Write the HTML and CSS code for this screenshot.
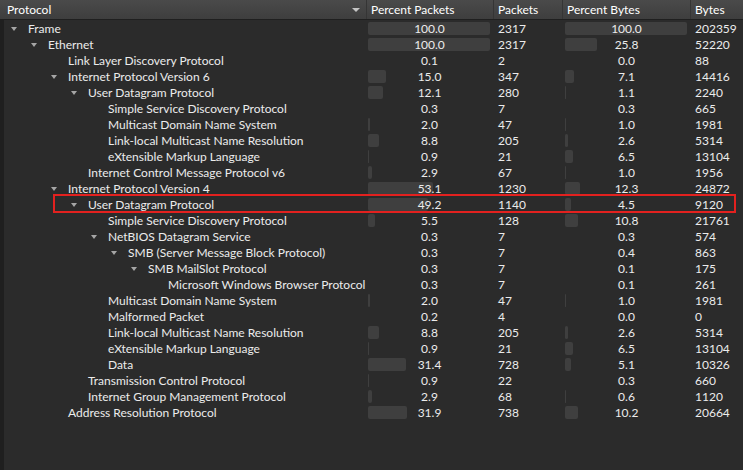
FILE: index.html
```html
<!DOCTYPE html>
<html>
<head>
<meta charset="utf-8">
<link rel="stylesheet" href="styles.css">
</head>
<body>
<div class="view">
  <div class="head">
    <div class="hc hc-proto"><span>Protocol</span><span class="sort"></span></div>
    <div class="hc">Percent Packets</div>
    <div class="hc">Packets</div>
    <div class="hc">Percent Bytes</div>
    <div class="hc">Bytes</div>
  </div>
  <div class="body">
    <div class="row"><div class="tree l0"><span class="tw open"></span>Frame</div><div class="pct"><i class="bar" style="width:122px"></i><span>100.0</span></div><div class="num">2317</div><div class="pct pb"><i class="bar" style="width:122px"></i><span>100.0</span></div><div class="num">202359</div></div>
    <div class="row"><div class="tree l1"><span class="tw open"></span>Ethernet</div><div class="pct"><i class="bar" style="width:122px"></i><span>100.0</span></div><div class="num">2317</div><div class="pct pb"><i class="bar" style="width:32px"></i><span>25.8</span></div><div class="num">52220</div></div>
    <div class="row"><div class="tree l2"><span class="tw"></span>Link Layer Discovery Protocol</div><div class="pct"><i class="bar" style="width:0px"></i><span>0.1</span></div><div class="num">2</div><div class="pct pb"><i class="bar" style="width:0px"></i><span>0.0</span></div><div class="num">88</div></div>
    <div class="row"><div class="tree l2"><span class="tw open"></span>Internet Protocol Version 6</div><div class="pct"><i class="bar" style="width:18px"></i><span>15.0</span></div><div class="num">347</div><div class="pct pb"><i class="bar" style="width:9px"></i><span>7.1</span></div><div class="num">14416</div></div>
    <div class="row"><div class="tree l3"><span class="tw open"></span>User Datagram Protocol</div><div class="pct"><i class="bar" style="width:15px"></i><span>12.1</span></div><div class="num">280</div><div class="pct pb"><i class="bar" style="width:1px"></i><span>1.1</span></div><div class="num">2240</div></div>
    <div class="row"><div class="tree l4"><span class="tw"></span>Simple Service Discovery Protocol</div><div class="pct"><i class="bar" style="width:0px"></i><span>0.3</span></div><div class="num">7</div><div class="pct pb"><i class="bar" style="width:0px"></i><span>0.3</span></div><div class="num">665</div></div>
    <div class="row"><div class="tree l4"><span class="tw"></span>Multicast Domain Name System</div><div class="pct"><i class="bar" style="width:2px"></i><span>2.0</span></div><div class="num">47</div><div class="pct pb"><i class="bar" style="width:1px"></i><span>1.0</span></div><div class="num">1981</div></div>
    <div class="row"><div class="tree l4"><span class="tw"></span>Link-local Multicast Name Resolution</div><div class="pct"><i class="bar" style="width:11px"></i><span>8.8</span></div><div class="num">205</div><div class="pct pb"><i class="bar" style="width:3px"></i><span>2.6</span></div><div class="num">5314</div></div>
    <div class="row"><div class="tree l4"><span class="tw"></span>eXtensible Markup Language</div><div class="pct"><i class="bar" style="width:1px"></i><span>0.9</span></div><div class="num">21</div><div class="pct pb"><i class="bar" style="width:8px"></i><span>6.5</span></div><div class="num">13104</div></div>
    <div class="row"><div class="tree l3"><span class="tw"></span>Internet Control Message Protocol v6</div><div class="pct"><i class="bar" style="width:4px"></i><span>2.9</span></div><div class="num">67</div><div class="pct pb"><i class="bar" style="width:1px"></i><span>1.0</span></div><div class="num">1956</div></div>
    <div class="row"><div class="tree l2"><span class="tw open"></span>Internet Protocol Version 4</div><div class="pct"><i class="bar" style="width:65px"></i><span>53.1</span></div><div class="num">1230</div><div class="pct pb"><i class="bar" style="width:15px"></i><span>12.3</span></div><div class="num">24872</div></div>
    <div class="row sel"><div class="tree l3"><span class="tw open"></span>User Datagram Protocol</div><div class="pct"><i class="bar" style="width:60px"></i><span>49.2</span></div><div class="num">1140</div><div class="pct pb"><i class="bar" style="width:6px"></i><span>4.5</span></div><div class="num">9120</div><div class="mark"></div></div>
    <div class="row"><div class="tree l4"><span class="tw"></span>Simple Service Discovery Protocol</div><div class="pct"><i class="bar" style="width:7px"></i><span>5.5</span></div><div class="num">128</div><div class="pct pb"><i class="bar" style="width:13px"></i><span>10.8</span></div><div class="num">21761</div></div>
    <div class="row"><div class="tree l4"><span class="tw open"></span>NetBIOS Datagram Service</div><div class="pct"><i class="bar" style="width:0px"></i><span>0.3</span></div><div class="num">7</div><div class="pct pb"><i class="bar" style="width:0px"></i><span>0.3</span></div><div class="num">574</div></div>
    <div class="row"><div class="tree l5"><span class="tw open"></span>SMB (Server Message Block Protocol)</div><div class="pct"><i class="bar" style="width:0px"></i><span>0.3</span></div><div class="num">7</div><div class="pct pb"><i class="bar" style="width:0px"></i><span>0.4</span></div><div class="num">863</div></div>
    <div class="row"><div class="tree l6"><span class="tw open"></span>SMB MailSlot Protocol</div><div class="pct"><i class="bar" style="width:0px"></i><span>0.3</span></div><div class="num">7</div><div class="pct pb"><i class="bar" style="width:0px"></i><span>0.1</span></div><div class="num">175</div></div>
    <div class="row"><div class="tree l7"><span class="tw"></span>Microsoft Windows Browser Protocol</div><div class="pct"><i class="bar" style="width:0px"></i><span>0.3</span></div><div class="num">7</div><div class="pct pb"><i class="bar" style="width:0px"></i><span>0.1</span></div><div class="num">261</div></div>
    <div class="row"><div class="tree l4"><span class="tw"></span>Multicast Domain Name System</div><div class="pct"><i class="bar" style="width:2px"></i><span>2.0</span></div><div class="num">47</div><div class="pct pb"><i class="bar" style="width:1px"></i><span>1.0</span></div><div class="num">1981</div></div>
    <div class="row"><div class="tree l4"><span class="tw"></span>Malformed Packet</div><div class="pct"><i class="bar" style="width:0px"></i><span>0.2</span></div><div class="num">4</div><div class="pct pb"><i class="bar" style="width:0px"></i><span>0.0</span></div><div class="num">0</div></div>
    <div class="row"><div class="tree l4"><span class="tw"></span>Link-local Multicast Name Resolution</div><div class="pct"><i class="bar" style="width:11px"></i><span>8.8</span></div><div class="num">205</div><div class="pct pb"><i class="bar" style="width:3px"></i><span>2.6</span></div><div class="num">5314</div></div>
    <div class="row"><div class="tree l4"><span class="tw"></span>eXtensible Markup Language</div><div class="pct"><i class="bar" style="width:1px"></i><span>0.9</span></div><div class="num">21</div><div class="pct pb"><i class="bar" style="width:8px"></i><span>6.5</span></div><div class="num">13104</div></div>
    <div class="row"><div class="tree l4"><span class="tw"></span>Data</div><div class="pct"><i class="bar" style="width:38px"></i><span>31.4</span></div><div class="num">728</div><div class="pct pb"><i class="bar" style="width:6px"></i><span>5.1</span></div><div class="num">10326</div></div>
    <div class="row"><div class="tree l3"><span class="tw"></span>Transmission Control Protocol</div><div class="pct"><i class="bar" style="width:1px"></i><span>0.9</span></div><div class="num">22</div><div class="pct pb"><i class="bar" style="width:0px"></i><span>0.3</span></div><div class="num">660</div></div>
    <div class="row"><div class="tree l3"><span class="tw"></span>Internet Group Management Protocol</div><div class="pct"><i class="bar" style="width:4px"></i><span>2.9</span></div><div class="num">68</div><div class="pct pb"><i class="bar" style="width:1px"></i><span>0.6</span></div><div class="num">1120</div></div>
    <div class="row"><div class="tree l2"><span class="tw"></span>Address Resolution Protocol</div><div class="pct"><i class="bar" style="width:39px"></i><span>31.9</span></div><div class="num">738</div><div class="pct pb"><i class="bar" style="width:13px"></i><span>10.2</span></div><div class="num">20664</div></div>
  </div>
</div>
</body>
</html>
```
FILE: styles.css
```css
html, body {
  margin: 0;
  padding: 0;
  background: #2b2b2b;
}
.view {
  width: 743px;
  height: 470px;
  display: flex;
  flex-direction: column;
  font-family: "Segoe UI", Lato, "Liberation Sans", sans-serif;
  font-size: 12px;
  color: #ececec;
  overflow: hidden;
}
.head {
  display: grid;
  grid-template-columns: 366px 127px 69px 128px 53px;
  height: 19px;
  background: linear-gradient(#4a4a4a, #3e3e3e);
  border-bottom: 1px solid #1f1f1f;
  color: #ffffff;
}
.hc {
  display: flex;
  align-items: center;
  padding-left: 4px;
  border-left: 1px solid #353535;
  white-space: nowrap;
  overflow: hidden;
}
.hc-proto {
  border-left: none;
  padding-left: 7px;
  justify-content: space-between;
  padding-right: 6px;
}
.sort {
  width: 0;
  height: 0;
  border-left: 4px solid transparent;
  border-right: 4px solid transparent;
  border-top: 4px solid #c4c4c4;
}
.body {
  flex: 1;
  padding-top: 1px;
  background: #2b2b2b;
  border-left: 4px solid #1f1f1f;
}
.row {
  display: grid;
  grid-template-columns: 362px 127px 69px 129px 52px;
  height: 16px;
  line-height: 16px;
  white-space: nowrap;
  position: relative;
}
.tree {
  display: flex;
  align-items: center;
}
.l0 { padding-left: 4px; }
.l1 { padding-left: 24px; }
.l2 { padding-left: 44px; }
.l3 { padding-left: 64px; }
.l4 { padding-left: 84px; }
.l5 { padding-left: 104px; }
.l6 { padding-left: 124px; }
.l7 { padding-left: 144px; }
.tw {
  width: 20px;
  height: 16px;
  flex: none;
  display: flex;
  align-items: center;
  padding-left: 3px;
  box-sizing: border-box;
}
.tw.open::before {
  content: "";
  width: 0;
  height: 0;
  border-left: 3.5px solid transparent;
  border-right: 3.5px solid transparent;
  border-top: 4px solid #a6a6a6;
  margin-top: -1px;
}
.pct {
  display: grid;
  text-align: center;
}
.pct > * {
  grid-area: 1 / 1;
}
.bar {
  display: block;
  align-self: start;
  justify-self: start;
  margin-top: 1px;
  margin-left: 2px;
  height: 13px;
  background: #3f3f3f;
  border-radius: 2px;
}
.pb .bar {
  margin-left: 3px;
}
.pct span {
  position: relative;
}
.num {
  padding-left: 5px;
}
.num:last-child,
.pb + .num {
  padding-left: 4px;
}
.mark {
  position: absolute;
  left: 49px;
  top: -3px;
  width: 679px;
  height: 15px;
  border: 2px solid #e3211f;
  pointer-events: none;
}
```
